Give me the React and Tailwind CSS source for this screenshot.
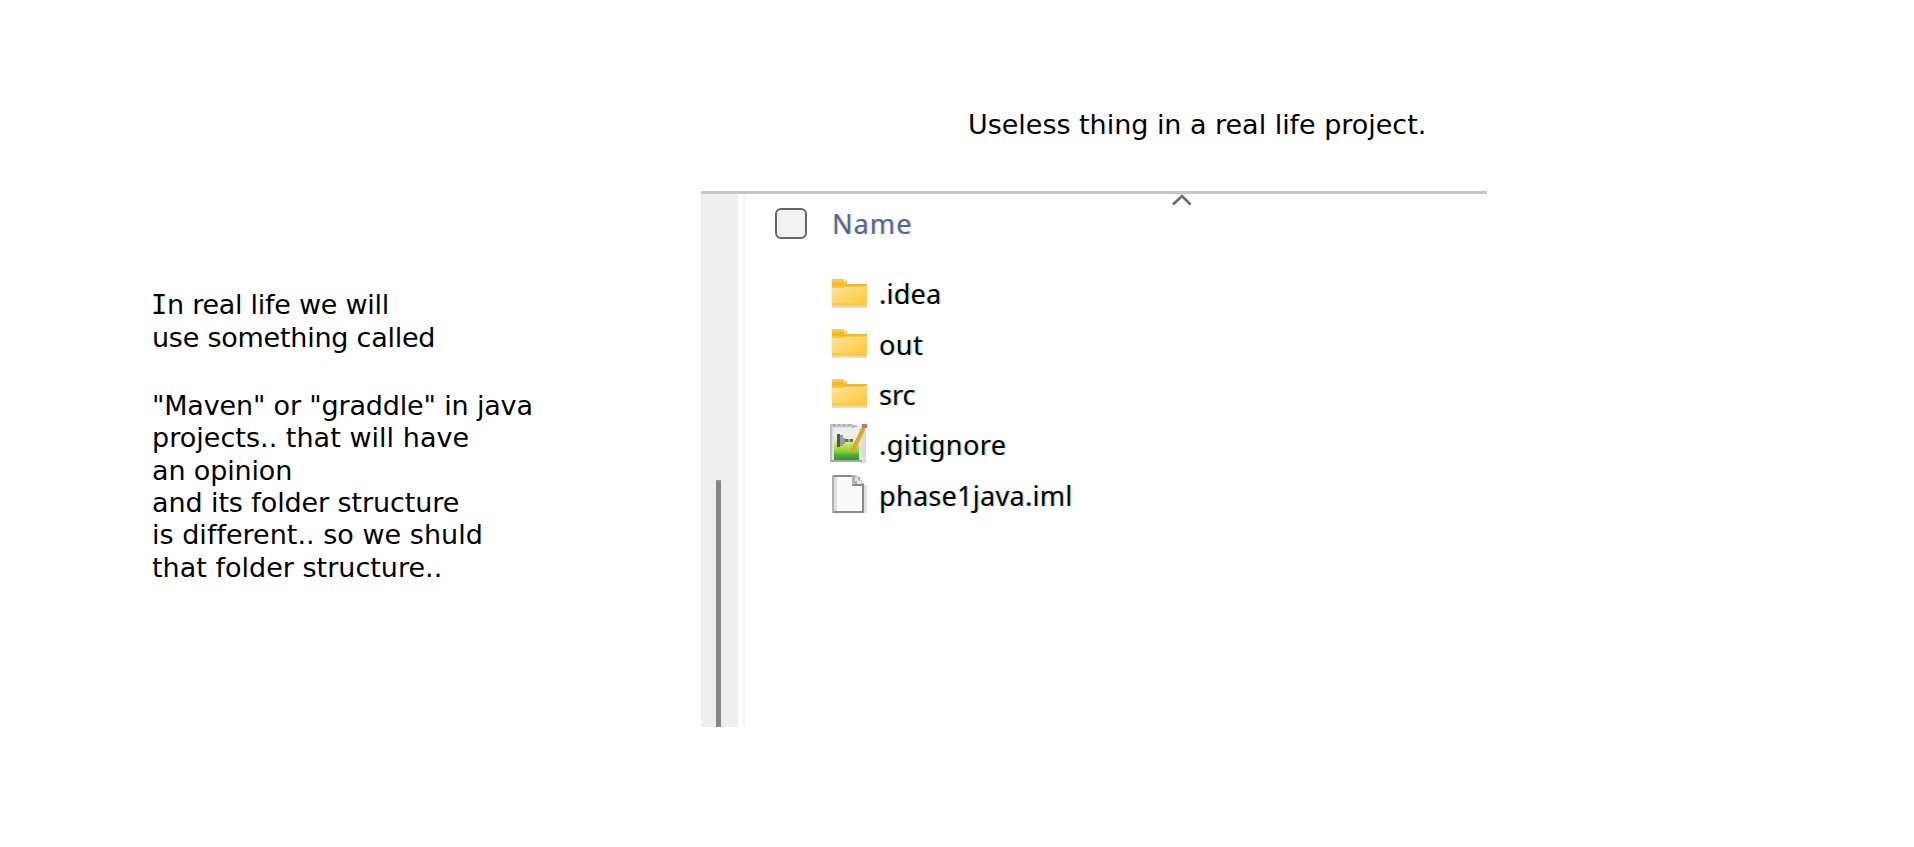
const NOTES = [
  ["In real life we will", "h-[33px]", "tracking-[-0.26px]"],
  ["use something called", "h-[68px]", "tracking-[-0.24px]"],
  ['"Maven" or "graddle" in java', "h-[32px]", "tracking-[-0.17px]"],
  ["projects.. that will have", "h-[33px]", "tracking-[0.03px]"],
  ["an opinion", "h-[32px]", "tracking-[-0.15px]"],
  ["and its folder structure", "h-[32px]", "tracking-[-0.1px]"],
  ["is different.. so we shuld", "h-[33px]", "tracking-[0.02px]"],
  ["that folder structure..", "h-[33px]", "tracking-[0.01px]"],
];

function FolderIcon() {
  return (
    <svg width="37" height="30" viewBox="0 0 37 30" shapeRendering="crispEdges">
      <defs>
        <linearGradient id="folder" x1="0" y1="0" x2="1" y2="1">
          <stop offset="0" stopColor="#ffe69c" />
          <stop offset="1" stopColor="#fdc634" />
        </linearGradient>
      </defs>
      <rect x="0" y="0" width="1" height="28" fill="#fff3d3" />
      <rect x="1" y="0" width="12" height="3" fill="#fcc94c" />
      <rect x="1" y="3" width="12" height="5" fill="#fab91b" />
      <rect x="13" y="1" width="3" height="5" fill="#fddda0" />
      <rect x="13" y="3" width="3" height="3" fill="#fbc858" />
      <rect x="13" y="5" width="23" height="3" fill="#f3b92c" />
      <rect x="1" y="7" width="35" height="19" fill="url(#folder)" />
      <rect x="1" y="7" width="12" height="2" fill="#f7c548" />
      <rect x="13" y="7" width="20" height="1" fill="#f3c350" />
      <rect x="1" y="24" width="35" height="3" fill="#fbc94e" />
      <rect x="1" y="27" width="35" height="2" fill="#f2dcae" />
    </svg>
  );
}

function NotepadIcon() {
  return (
    <svg className="-mt-[3px] -ml-px" width="40" height="40" viewBox="0 0 40 40" shapeRendering="crispEdges">
      <defs>
        <linearGradient id="grass" x1="0" y1="0" x2="0" y2="1">
          <stop offset="0" stopColor="#edf3f6" />
          <stop offset=".35" stopColor="#e6f0dc" />
          <stop offset=".5" stopColor="#c8ea60" />
          <stop offset=".72" stopColor="#8fd33c" />
          <stop offset=".86" stopColor="#45ac35" />
          <stop offset="1" stopColor="#2f9a30" />
        </linearGradient>
      </defs>
      <rect x="31" y="8" width="5" height="32" fill="#dcdcdc" />
      <rect x="0" y="1" width="2" height="38" fill="#c0c0c0" />
      <rect x="2" y="3" width="30" height="34" fill="#dfe3e5" />
      <path d="M1 1h22v3H1z" fill="#c4c4c8" />
      <path d="M3 1h2v2H3zM8 1h2v2H8zM13 1h2v2h-2zM18 1h2v2h-2z" fill="#a8a8aa" />
      <path d="M22 2h5v2h5v3H22z" fill="#bcbcc2" />
      <path d="M25 4h7v2h-7z" fill="#eef0f2" />
      <rect x="4" y="5" width="25" height="32" fill="url(#grass)" />
      <rect x="0" y="37" width="32" height="2" fill="#a6a6a6" />
      <rect x="7" y="11" width="3" height="13" fill="#555" />
      <path d="M10 12h3v3h2v6h-2v2h-3z" fill="#9a9d98" />
      <path d="M15 16h3v3h-3zM20 16h3v3h-3z" fill="#66705f" />
      <path d="M18 16h2v3h-2z" fill="#a5ac9d" />
      <path d="M34 5l-7 13-5 11" stroke="#dda633" strokeWidth="4" fill="none" />
      <rect x="32" y="1" width="5" height="4" fill="#b9767c" />
      <rect x="37" y="0" width="1" height="5" fill="#ecd8da" />
    </svg>
  );
}

function FileIcon() {
  return (
    <svg className="-mt-[2px]" width="37" height="40" viewBox="0 0 37 40" shapeRendering="crispEdges">
      <rect x="33" y="11" width="3" height="28" fill="#e0e0de" />
      <rect x="3" y="2" width="30" height="35" fill="#fafafa" />
      <path d="M22 1h12v10H22z" fill="#fff" />
      <path d="M1 1h22v2H1zM1 37h32v2H1z" fill="#8a8a8a" />
      <rect x="1" y="1" width="2" height="38" fill="#b0b0ae" />
      <rect x="3" y="3" width="3" height="34" fill="#e0e0de" />
      <rect x="31" y="11" width="2" height="28" fill="#8a8a8a" />
      <path d="M21 1h3v9h-3z" fill="#b0b0ae" />
      <path d="M24 1h2v2h3v3h2v3h2v3H21v-3h3z" fill="#c8c8c6" />
      <path d="M24 4h3v3h3v3h-6z" fill="#e8e8e6" />
      <path d="M24 7h2v3h-2zM27 3h2v3h-2z" fill="#a6a6a4" />
      <path d="M21 10h12v2H21z" fill="#8a8a8a" />
    </svg>
  );
}

const FILES = [
  [".idea", FolderIcon, "h-[51px]", "tracking-[0.25px]"],
  ["out", FolderIcon, "h-[50px]", "pt-[2px] tracking-[0.5px]"],
  ["src", FolderIcon, "h-[50px]", "pt-[2px] tracking-[0px]"],
  [".gitignore", NotepadIcon, "h-[51px]", "tracking-[0.45px]"],
  ["phase1java.iml", FileIcon, "h-[50px]", "pt-[2px] tracking-[0.3px]"],
];

export default function App() {
  return (
    <main className="flex h-[847px] w-[1914px] overflow-hidden bg-white text-black">
      <section className="w-[701px] shrink-0 pt-[288px] pl-[152px] font-['DejaVu_Sans',sans-serif] text-[27px] leading-[33px]">
        {NOTES.map(([text, height, tracking]) => (
          <p key={text} className={`${height} ${tracking} whitespace-pre`}>
            {text.startsWith("I") ? (
              <>
                <span className="-ml-px font-['DejaVu_Sans_Mono',monospace]">I</span>
                <span>{text.slice(1)}</span>
              </>
            ) : (
              text
            )}
          </p>
        ))}
      </section>
      <section className="w-[786px] shrink-0">
        <h1 className="h-[191px] pt-[108px] pl-[267px] font-['DejaVu_Sans',sans-serif] text-[27px] leading-[33px] tracking-[-0.03px] whitespace-nowrap">
          Useless thing in a real life project.
        </h1>
        <div className="flex h-[536px] border-t-3 border-[#c6c6c6] font-['Noto_Sans',sans-serif] text-[27px]">
          <div className="w-[37px] bg-[#efefef] pt-[286px] pl-[15px]">
            <div className="h-[247px] w-[5px] border-t-2 border-[#969696] bg-[#868686]" />
          </div>
          <div className="ml-[5px] w-[2px] bg-[#f7f7f7]" />
          <div className="flex-1 pl-[30px]">
            <div className="flex h-[74px] items-start pt-[14px]">
              <span className="h-[31px] w-[32px] rounded-[6px] border-2 border-[#666] bg-[#f2f2f2]" />
              <span className="ml-[25px] leading-[31px] tracking-[1.1px] text-[#5b628e] [text-shadow:-1px_0_#fff3b8,1px_0_#a8dcff]">Name</span>
              <svg className="-mt-[14px] mr-[294px] ml-auto" width="22" height="12" viewBox="0 0 22 12">
                <path d="M2 10.5L11 2l8.5 8.5" fill="none" stroke="#6a6a6a" strokeWidth="2.6" />
              </svg>
            </div>
            {FILES.map(([name, Icon, height, tracking]) => (
              <div key={name} className={`${height} flex items-center pl-[56px]`}>
                <div className="w-[48px]"><Icon /></div>
                <span className={`${tracking} leading-[36px] [text-shadow:-1px_0_#fff3b0,1px_0_#90d8ff]`}>{name}</span>
              </div>
            ))}
          </div>
        </div>
      </section>
    </main>
  );
}
